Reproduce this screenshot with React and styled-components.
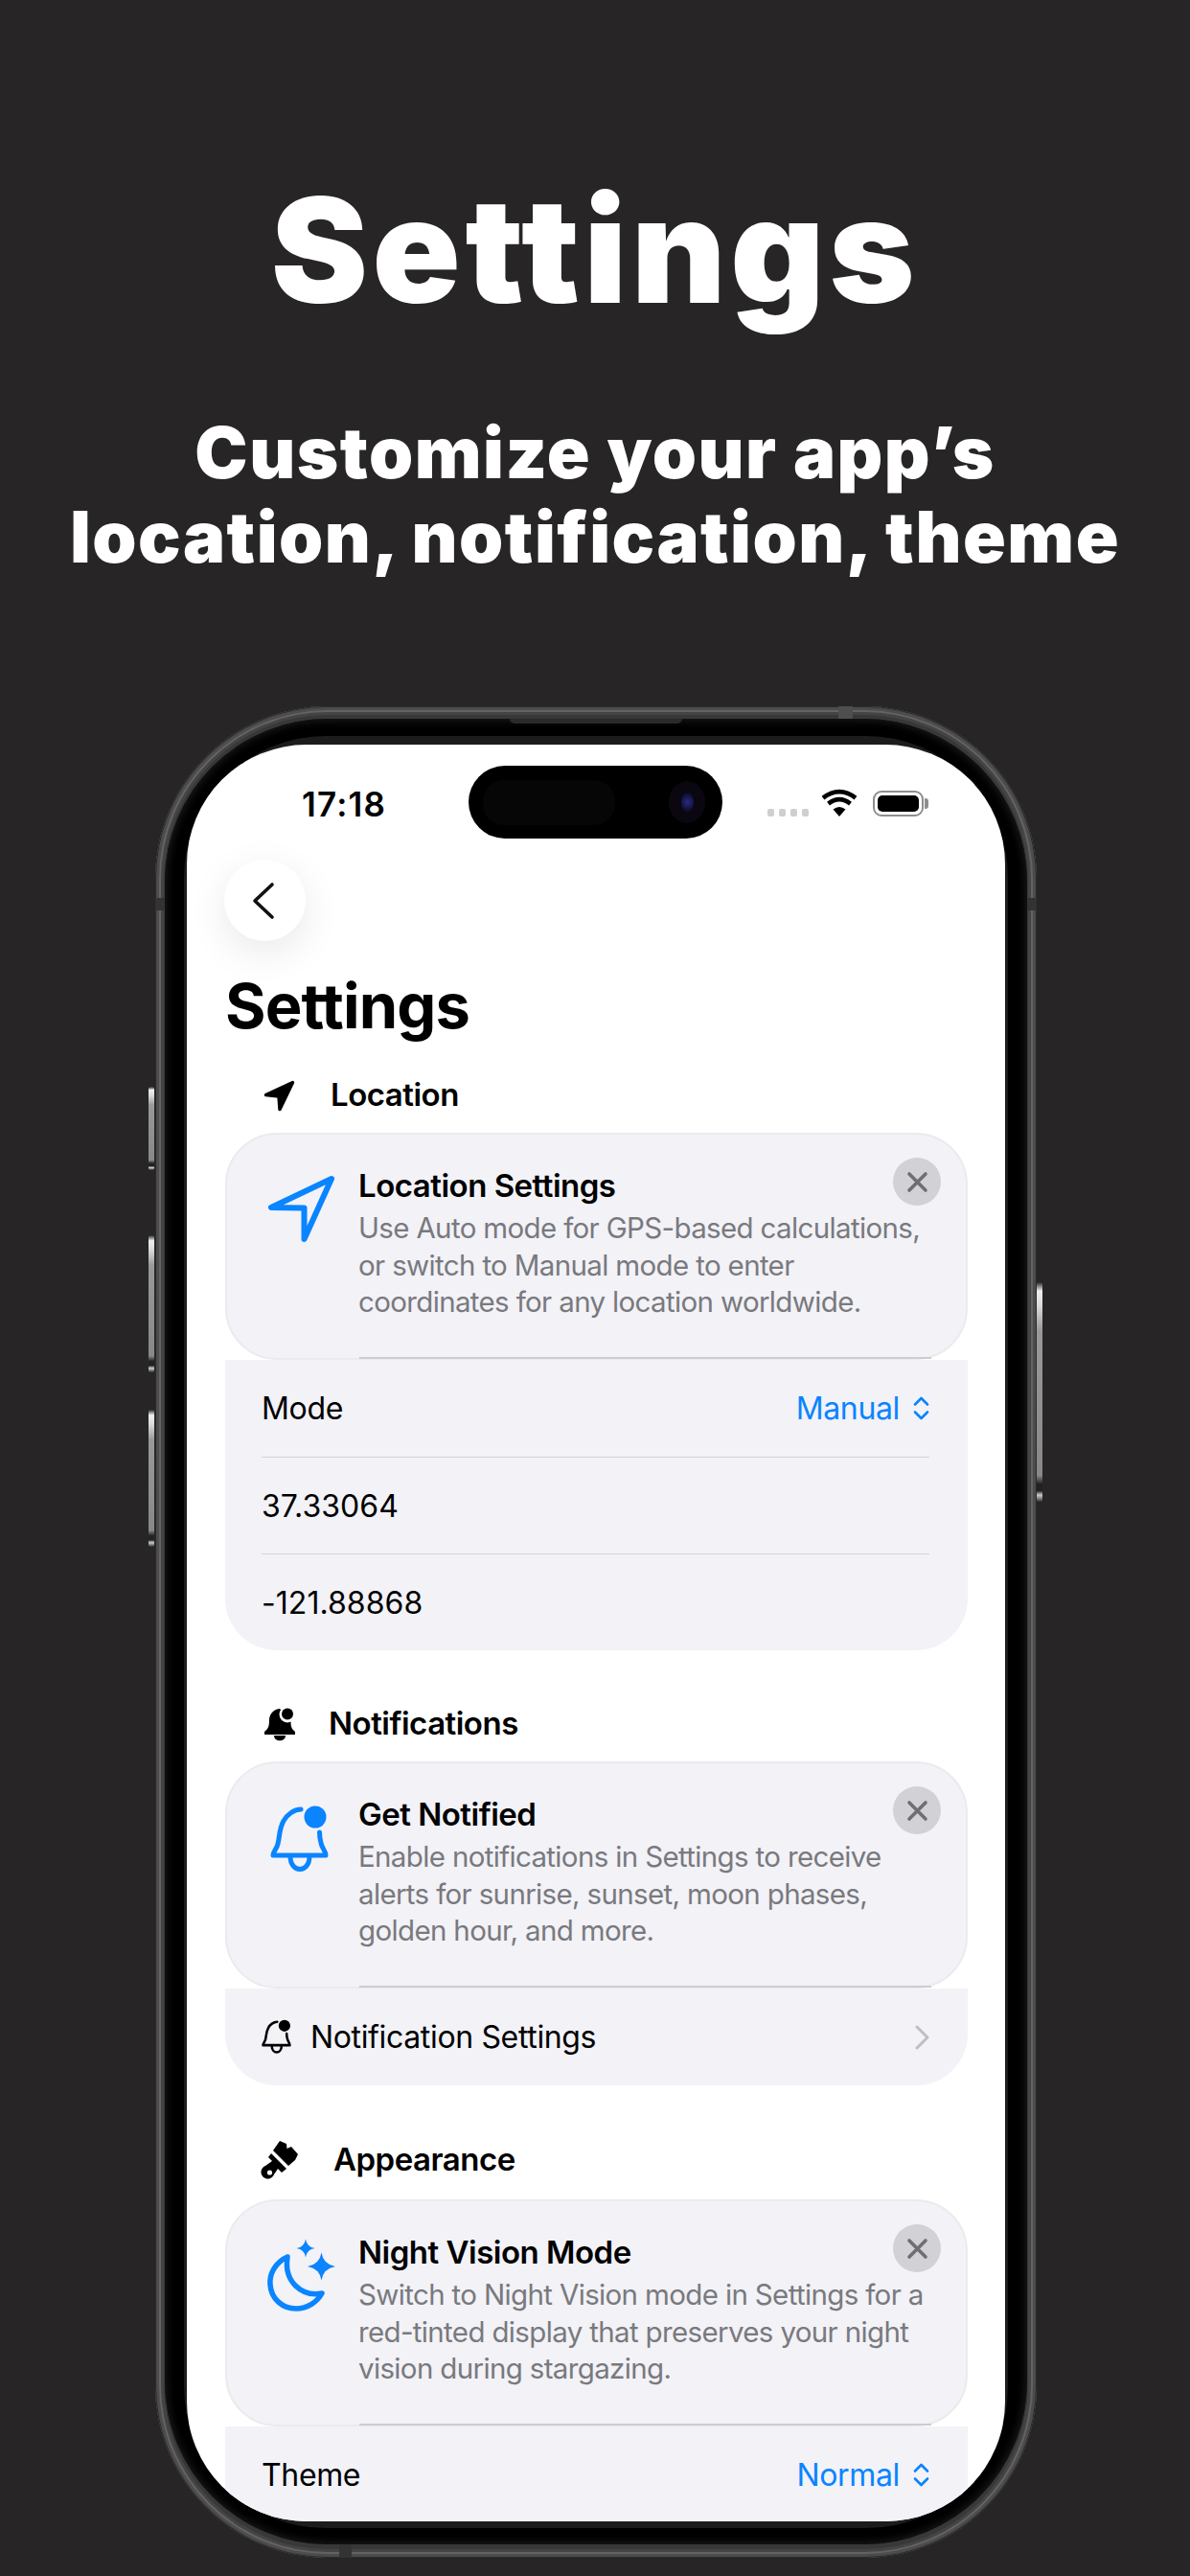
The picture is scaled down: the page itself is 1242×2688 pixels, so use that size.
import React from "react";
import styled, { createGlobalStyle } from "styled-components";

const Global = createGlobalStyle`
  html, body { margin: 0; padding: 0; background: #272526; }
  * { box-sizing: border-box; }
`;

const BLUE = "#0a84ff";
const SANS = `Inter, "Liberation Sans", sans-serif`;

const Page = styled.div`
  width: 1242px; height: 2688px; overflow: hidden; background: #272526;
  display: flex; flex-direction: column; font-family: ${SANS};
`;
const Hero = styled.header`
  height: 737px; padding-top: 172px; text-align: center; color: #fff; flex: none;
`;
const HeroTitle = styled.h1`
  margin: 0; font-size: 152px; line-height: 178px; font-weight: 900; letter-spacing: 4.6px;
`;
const HeroSub = styled.p`
  margin: 78px 0 0; font-size: 74px; line-height: 88px; font-weight: 900; letter-spacing: 1.5px; white-space: nowrap;
`;
const Frame = styled.div`
  position: relative; flex: none; width: 920px; margin-left: 162px; padding: 13px 10px 14px;
  border-radius: 180px; background: #383838;
  box-shadow: inset 0 0 0 1px #2a2a2a, inset 0 0 0 4px #4c4c4c, inset 0 0 0 6px #636363, inset 0 0 0 9px #444;
`;
const SideButton = styled.span`
  position: absolute; width: 6px; top: ${p => p.$top}px; height: ${p => p.$h}px;
  ${p => p.$right ? "right: -6px;" : "left: -7px;"}
  background: linear-gradient(to bottom, #2c2c2c 0, #eee 4%, #ddd 10%, #999 22%, #888 88%, #222 92%, #222 95%, #ccc 97%, #333 100%);
  border-radius: 2px;
`;
const FrameMark = styled.span`
  position: absolute; background: #4e4e4e;
  ${p => p.$css}
`;
const Speaker = styled.span`
  position: absolute; top: 13px; left: 370px; width: 180px; height: 5px; background: #2a2a2a;
  border-radius: 0 0 6px 6px;
`;
const Bezel = styled.div`
  padding: 18px 20px 17px; border-radius: 170px; background: #000;
  box-shadow: inset 0 0 8px 2px #1b1b1b;
`;
const Rim = styled.div`
  padding: 9px 3px 7px; border-radius: 148px; background: #1c1c1c;
`;
const Screen = styled.main`
  height: 1854px; border-radius: 125px; background: #fff; overflow: hidden; color: #000;
`;
const StatusBar = styled.div`
  display: flex; align-items: center; height: 98px; padding: 22px 0 0 120px;
`;
const Clock = styled.div`
  width: 174px; font-size: 35px; font-weight: 600; line-height: 40px; letter-spacing: 1.2px; padding-top: 4px;
`;
const Island = styled.div`
  width: 265px; height: 76px; border-radius: 38px; background: #000; display: flex; align-items: center;
  justify-content: space-between; padding: 0 18px 0 15px; flex: none;
`;
const IslandSensor = styled.div`
  width: 138px; height: 47px; border-radius: 22px; background: #060606;
`;
const IslandCamera = styled.div`
  width: 38px; height: 44px; border-radius: 50%; background: #0b0710; display: flex; align-items: center; justify-content: center;
  &::after { content: ""; width: 13px; height: 20px; border-radius: 50%; background: radial-gradient(circle, #2a2a80 0, #12123f 60%, #08081c 100%); }
`;
const Indicators = styled.div`
  display: flex; align-items: flex-end; height: 27px; margin-left: 47px; margin-top: 3px;
`;
const SignalDots = styled.div`
  display: flex; gap: 5px; margin-right: 13px;
`;
const SignalDot = styled.i`
  width: 7px; height: 8px; border-radius: 2px; background: #cfcfcf; display: block;
`;
const Battery = styled.div`
  position: relative; width: 53px; height: 27px; margin-left: 16px; border: 2px solid #8e8e8e; border-radius: 9px; padding: 3px; background: #fff;
  &::before { content: ""; display: block; height: 100%; background: #000; border-radius: 5px; }
  &::after { content: ""; position: absolute; right: -7px; top: 6px; width: 4px; height: 11px; background: #8e8e8e; border-radius: 0 3px 3px 0; }
`;
const Content = styled.div`
  padding: 0 39px 0 40px;
`;
const BackButton = styled.button`
  width: 85px; height: 85px; margin: 22px 0 0 -1px; border: 0; padding: 0; border-radius: 50%; background: #fff; display: flex; align-items: center; justify-content: center;
  box-shadow: 0 12px 40px rgba(0,0,0,.09);
`;
const ScreenTitle = styled.h2`
  margin: 31px 0 0; font-size: 65px; line-height: 74px; font-weight: 700; letter-spacing: -0.9px;
`;
const Section = styled.section`
  margin-top: ${p => p.$gap ?? 52}px;
`;
const SectionHeader = styled.div`
  display: flex; align-items: center; height: 50px; margin-bottom: 14px; padding: 0 0 ${p => p.$pb ?? 0}px 40px;
`;
const SectionIcon = styled.span`
  display: flex; width: ${p => p.$w}px; flex: none;
`;
const SectionLabel = styled.h3`
  margin: 0 0 3px; font-size: 33px; line-height: 40px; font-weight: 600; letter-spacing: -0.5px;
`;
const InfoCard = styled.div`
  position: relative; height: 237px; display: flex; padding: 33px 24px 0 42px;
  background: #f2f2f7; border: 2px solid #ebebee; border-radius: 54px;
  &::after { content: ""; position: absolute; left: 138px; right: 36px; bottom: -1px; height: 2px; background: #cdcdd0; }
`;
const CardIcon = styled.span`
  display: flex; width: ${p => 95 - (p.$left ?? 0)}px; flex: none; margin-top: ${p => p.$top ?? 9}px; margin-left: ${p => p.$left ?? 0}px;
`;
const CardText = styled.div`
  flex: 1; min-width: 0;
`;
const CardTitle = styled.div`
  font-size: 33px; line-height: 40px; font-weight: 600; letter-spacing: -0.5px;
`;
const CardBody = styled.p`
  margin: 5px 0 0; font-size: 29.5px; line-height: 38.7px; font-weight: 400; color: #79797e; letter-spacing: -0.65px; white-space: nowrap;
`;
const CloseButton = styled.button`
  position: absolute; top: 24px; right: 26px; width: 50px; height: 50px; padding: 0; border: 0; border-radius: 50%; background: #d1d1d6;
  display: flex; align-items: center; justify-content: center;
`;
const Group = styled.div`
  background: #f2f2f7; padding: 0 40px ${p => p.$open ? "60px" : "0"} 38px;
  border-radius: ${p => p.$open ? "0" : "0 0 54px 54px"};
`;
const Row = styled.div`
  display: flex; align-items: center; justify-content: space-between; height: 101px;
  font-size: 32px; letter-spacing: -0.35px;
  & + & { border-top: 1.5px solid #d5d5d8; }
`;
const RowValue = styled.span`
  letter-spacing: 0.05px;
`;
const RowLead = styled.span`
  display: flex; align-items: center; gap: 20px;
`;
const PickerValue = styled.span`
  display: flex; align-items: center; gap: 14px; color: ${BLUE};
`;

const Icon = styled.svg`
  display: block; flex: none; overflow: visible;
`;

const BackChevron = () => (
  <Icon width="24" height="38" viewBox="0 0 24 38" fill="none" stroke="#111" strokeWidth="3.6" strokeLinecap="round" strokeLinejoin="round" style={{ marginLeft: -4 }}>
    <path d="M21 2 L3 19 L21 36" />
  </Icon>
);
const Wifi = () => (
  <Icon width="38" height="27" viewBox="0 0 38 27">
    <path d="M19 27 L12.5 19.5 Q19 14.5 25.5 19.5 Z" fill="#000" />
    <path d="M7.5 13.6 Q19 4.6 30.5 13.6" fill="none" stroke="#000" strokeWidth="4.6" />
    <path d="M2 7.6 Q19 -5.4 36 7.6" fill="none" stroke="#000" strokeWidth="4.6" />
  </Icon>
);
const ArrowFill = () => (
  <Icon width="33" height="33" viewBox="0 0 33 33" fill="#000" stroke="#000" strokeWidth="3.5" strokeLinejoin="round">
    <path d="M30.5 2.5 L2.5 15.5 L16 17 L17 30.5 Z" />
  </Icon>
);
const ArrowOutline = () => (
  <Icon width="71" height="70" viewBox="0 0 71 70" fill="none" stroke={BLUE} strokeWidth="6" strokeLinejoin="round">
    <path d="M67 4 L4 34 L38.5 34.5 L38.5 67 Z" />
  </Icon>
);
const BellGlyph = ({ color, sw, w, h, dotR = 11.5 }) => (
  <Icon width={w} height={h} viewBox="0 0 61 68" fill="none" stroke={color} strokeWidth={sw} strokeLinecap="round" strokeLinejoin="round">
    <path d="M32 3 C25 3 17 9 14 15 C9 24 10 32 8 39 C7 44 3 47 3 51 L58 51 C58 46 54 44 53 38 C52 34 51.5 31 51.5 27" />
    <path d="M21 52 C21 70 41 70 41 52" />
    <circle cx="47" cy="11" r={dotR} fill={color} stroke="none" />
  </Icon>
);
const BellFill = () => (
  <Icon width="34" height="36" viewBox="0 0 34 36">
    <path d="M17 2 C9 3 6 9 6 14 C6 20 5 23 1 26 L1 29 L33 29 L33 26 C29 23 28.5 20 28.5 15 Z" fill="#000" />
    <path d="M11 30 L23 30 C23 37 11 37 11 30 Z" fill="#000" />
    <circle cx="25" cy="8" r="8.5" fill="#fff" />
    <circle cx="25" cy="7.5" r="6" fill="#000" />
  </Icon>
);
const Brush = () => (
  <Icon width="36" height="40" viewBox="0 0 36 40" fill="#000">
    <path d="M17 0 L24 3 L24.5 8 L29 6 L36 14 L33 20 L26 26 L10 10 Z" />
    <path d="M8 13 L24 29 L19 33 L15 29 L11 35 A7 7 0 1 1 2 26 L9 21 L5 17 Z" />
    <circle cx="6.5" cy="33" r="2.6" fill="#fff" />
  </Icon>
);
const sparkle = (cx, cy, r) =>
  `M${cx} ${cy - r} Q${cx + r * 0.14} ${cy - r * 0.14} ${cx + r} ${cy} Q${cx + r * 0.14} ${cy + r * 0.14} ${cx} ${cy + r} Q${cx - r * 0.14} ${cy + r * 0.14} ${cx - r} ${cy} Q${cx - r * 0.14} ${cy - r * 0.14} ${cx} ${cy - r} Z`;
const MoonStars = () => (
  <Icon width="71" height="74" viewBox="0 0 71 74">
    <path d="M21 18 C8 24 2 36 3 47 C4 62 16 72 30 72 C42 72 52 65 57 56 C36 60 17 44 21 18 Z" fill="none" stroke={BLUE} strokeWidth="5.5" strokeLinejoin="round" />
    <path d={sparkle(56.5, 28, 14.5)} fill={BLUE} />
    <path d={sparkle(40, 9, 9.5)} fill={BLUE} />
  </Icon>
);
const CloseX = () => (
  <Icon width="21" height="21" viewBox="0 0 21 21" stroke="#6e6e73" strokeWidth="3.6" strokeLinecap="round">
    <path d="M2 2 L19 19 M19 2 L2 19" />
  </Icon>
);
const UpDown = () => (
  <Icon width="17" height="25" viewBox="0 0 17 25" fill="none" stroke={BLUE} strokeWidth="2.6" strokeLinecap="round" strokeLinejoin="round">
    <path d="M2 8.5 L8.5 2 L15 8.5 M2 16.5 L8.5 23 L15 16.5" />
  </Icon>
);
const RightChevron = () => (
  <Icon width="15" height="26" viewBox="0 0 15 26" fill="none" stroke="#bfbfc3" strokeWidth="3" strokeLinecap="round" strokeLinejoin="round">
    <path d="M2 2 L13 13 L2 24" />
  </Icon>
);

const InfoBlock = ({ icon, left, top, title, lines }) => (
  <InfoCard>
    <CardIcon $left={left} $top={top}>{icon}</CardIcon>
    <CardText>
      <CardTitle>{title}</CardTitle>
      <CardBody>{lines.map((l, i) => <React.Fragment key={i}>{l}{i < lines.length - 1 && <br />}</React.Fragment>)}</CardBody>
    </CardText>
    <CloseButton aria-label="Close"><CloseX /></CloseButton>
  </InfoCard>
);

export default function App() {
  return (
    <Page>
      <Global />
      <Hero>
        <HeroTitle>Settings</HeroTitle>
        <HeroSub>Customize your app’s<br />location, notification, theme</HeroSub>
      </Hero>
      <Frame>
        <SideButton $top={397} $h={87} />
        <SideButton $top={552} $h={143} />
        <SideButton $top={734} $h={143} />
        <SideButton $right $top={601} $h={229} />
        <FrameMark $css="top: 0; left: 713px; width: 15px; height: 13px;" />
        <FrameMark $css="bottom: 0; left: 192px; width: 13px; height: 14px; background: #333;" />
        <FrameMark $css="top: 200px; left: 0; width: 10px; height: 13px; background: #333;" />
        <FrameMark $css="top: 200px; right: 0; width: 10px; height: 13px; background: #333;" />
        <Speaker />
        <Bezel>
          <Rim>
            <Screen>
              <StatusBar>
                <Clock>17:18</Clock>
                <Island><IslandSensor /><IslandCamera /></Island>
                <Indicators>
                  <SignalDots><SignalDot /><SignalDot /><SignalDot /><SignalDot /></SignalDots>
                  <Wifi />
                  <Battery />
                </Indicators>
              </StatusBar>
              <Content>
                <BackButton aria-label="Back"><BackChevron /></BackButton>
                <ScreenTitle>Settings</ScreenTitle>
                <Section $gap={31}>
                  <SectionHeader>
                    <SectionIcon $w={70}><ArrowFill /></SectionIcon>
                    <SectionLabel>Location</SectionLabel>
                  </SectionHeader>
                  <InfoBlock icon={<ArrowOutline />} title="Location Settings" lines={["Use Auto mode for GPS-based calculations,", "or switch to Manual mode to enter", "coordinates for any location worldwide."]} />
                  <Group>
                    <Row><span>Mode</span><PickerValue>Manual <UpDown /></PickerValue></Row>
                    <Row><RowValue>37.33064</RowValue></Row>
                    <Row><RowValue>-121.88868</RowValue></Row>
                  </Group>
                </Section>
                <Section>
                  <SectionHeader>
                    <SectionIcon $w={68}><BellFill /></SectionIcon>
                    <SectionLabel>Notifications</SectionLabel>
                  </SectionHeader>
                  <InfoBlock icon={<BellGlyph color={BLUE} sw={5} w={61} h={68} />} left={3} top={12} title="Get Notified" lines={["Enable notifications in Settings to receive", "alerts for sunrise, sunset, moon phases,", "golden hour, and more."]} />
                  <Group>
                    <Row>
                      <RowLead><BellGlyph color="#000" sw={5} w={31} h={35} dotR={12} /><span>Notification Settings</span></RowLead>
                      <RightChevron />
                    </Row>
                  </Group>
                </Section>
                <Section $gap={55}>
                  <SectionHeader $pb={4}>
                    <SectionIcon $w={73}><Brush /></SectionIcon>
                    <SectionLabel>Appearance</SectionLabel>
                  </SectionHeader>
                  <InfoBlock icon={<MoonStars />} top={7} title="Night Vision Mode" lines={["Switch to Night Vision mode in Settings for a", "red-tinted display that preserves your night", "vision during stargazing."]} />
                  <Group $open>
                    <Row><span>Theme</span><PickerValue>Normal <UpDown /></PickerValue></Row>
                  </Group>
                </Section>
              </Content>
            </Screen>
          </Rim>
        </Bezel>
      </Frame>
    </Page>
  );
}
